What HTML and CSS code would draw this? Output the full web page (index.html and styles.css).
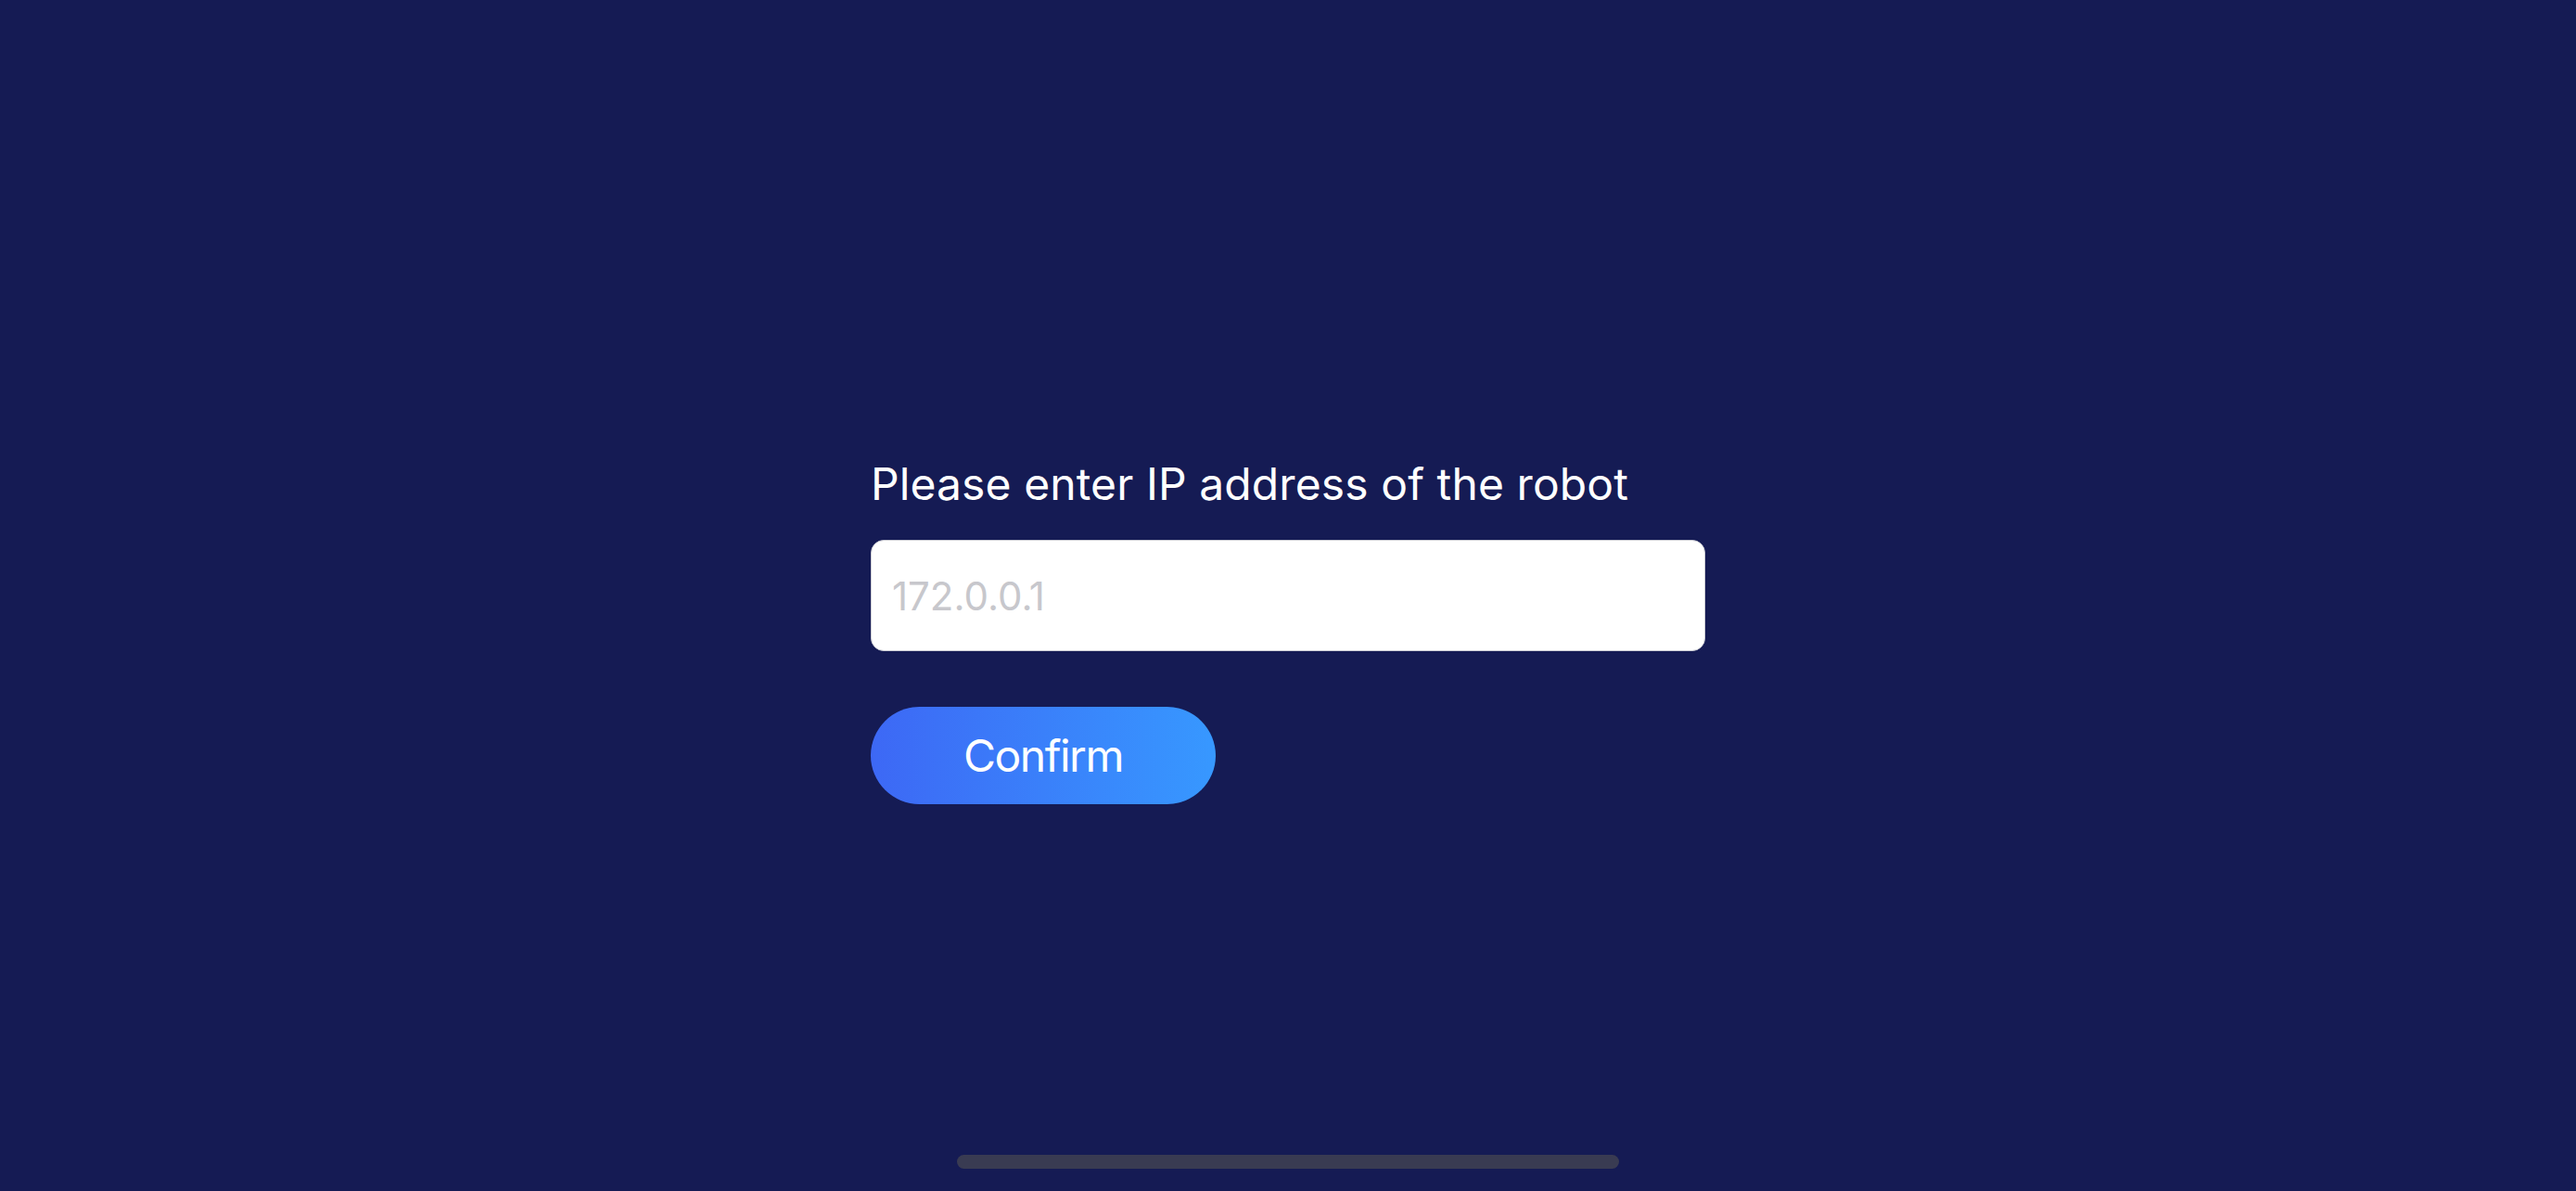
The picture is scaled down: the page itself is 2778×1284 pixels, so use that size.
FILE: index.html
```html
<!DOCTYPE html>
<html lang="en">
  <head>
    <meta charset="UTF-8" />
    <meta name="viewport" content="width=device-width, initial-scale=1.0" />
    <title>Connect robot</title>
    <link rel="stylesheet" href="styles.css">
  </head>
  <body>
    <div class="screen">
      <!-- 로봇 IP 입력 -->
      <form class="ip-form">
        <label class="ip-label" for="ipInput">Please enter IP address of the robot</label>
        <input class="ip-input" id="ipInput" type="text" placeholder="172.0.0.1" />
        <button class="confirm-btn" type="button">Confirm</button>
      </form>

      <div class="home-indicator"></div>
    </div>
  </body>
</html>
```

FILE: styles.css
```css
body {
  font-family: Inter, "Noto Sans", sans-serif;
  margin: 0;
  padding: 0;
  background-color: #151b54;
}

.screen {
  height: 100vh;
  display: flex;
  flex-direction: column;
  align-items: center;
}

.ip-form {
  width: 900px;
  margin-top: 493px;
  display: flex;
  flex-direction: column;
  align-items: flex-start;
}

.ip-label {
  color: #ffffff;
  font-size: 48px;
  line-height: 58px;
  letter-spacing: 0.1px;
}

.ip-input {
  box-sizing: border-box;
  width: 900px;
  height: 120px;
  margin-top: 31px;
  padding: 0 22px;
  border: 1px solid #cfd0d6;
  border-radius: 14px;
  background-color: #fff;
  font-family: inherit;
  font-size: 42px;
  color: #222;
  outline: none;
}

.ip-input::placeholder {
  color: #c7c7cc;
}

.confirm-btn {
  width: 372px;
  height: 105px;
  margin-top: 60px;
  border: none;
  border-radius: 53px;
  background: linear-gradient(90deg, #3d68f5, #3798ff);
  color: white;
  font-family: inherit;
  font-size: 48px;
  letter-spacing: -1.5px;
  cursor: pointer;
}

.home-indicator {
  width: 714px;
  height: 15px;
  margin-top: auto;
  margin-bottom: 24px;
  border-radius: 8px;
  background-color: #393b52;
}
```
